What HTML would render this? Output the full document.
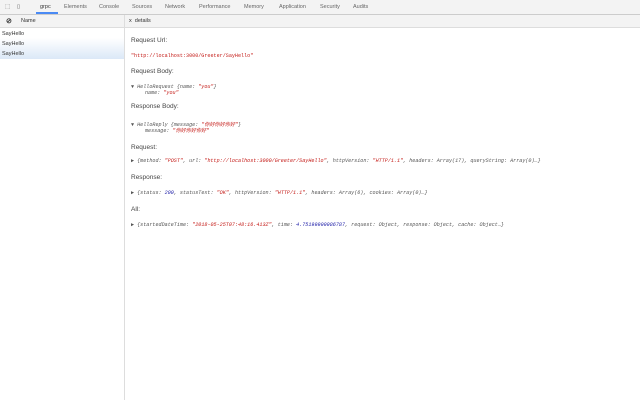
<!DOCTYPE html><html><head><style>
body{margin:0;width:640px;height:400px;background:#fff;font-family:"Liberation Sans",sans-serif;font-size:6px;color:#333;position:relative;overflow:hidden}
.top{position:absolute;left:0;top:0;width:640px;height:14px;background:#f3f3f3;border-bottom:1px solid #ccc}
.top span{position:absolute;top:4px;color:#666;font-size:5.5px}
.sub{position:absolute;left:0;top:15px;width:640px;height:12px;background:#f3f3f3;border-bottom:1px solid #ddd}
.left{position:absolute;left:0;top:28px;width:124px;height:372px;border-right:1px solid #ddd}
.r{position:absolute;left:2px;font-size:5.5px;color:#333}
.m{font-family:"Liberation Mono",monospace;font-style:italic;font-size:5.1px;color:#555;position:absolute;white-space:nowrap}
.h{position:absolute;left:131px;font-size:6.5px;color:#444}
.s{color:#c41a16}.n{color:#1a1aa6}
</style></head><body>
<div class="top">
<span style="left:5px;color:#555">⬚</span><span style="left:17px;color:#555">▯</span>
<span style="left:40px;color:#333">grpc</span>
<div style="position:absolute;left:36px;top:12px;width:22px;height:2px;background:#4a8af4"></div>
<span style="left:64px">Elements</span><span style="left:99px">Console</span><span style="left:132px">Sources</span><span style="left:165px">Network</span><span style="left:199px">Performance</span><span style="left:244px">Memory</span><span style="left:279px">Application</span><span style="left:320px">Security</span><span style="left:353px">Audits</span>
</div>
<div class="sub">
<span style="position:absolute;left:6px;top:2px;font-size:7px;font-weight:bold">⊘</span>
<span style="position:absolute;left:21px;top:3px;font-size:5.5px">Name</span>
<div style="position:absolute;left:124px;top:0;width:1px;height:12px;background:#ddd"></div>
<span style="position:absolute;left:129px;top:3px;font-size:5.5px">x&nbsp; details</span>
</div>
<div class="left">
<div style="position:absolute;left:0;top:10px;width:124px;height:21px;background:linear-gradient(#fff,#dbe8f7)"></div>
<span class="r" style="top:3px">SayHello</span><span class="r" style="top:13px">SayHello</span><span class="r" style="top:23px">SayHello</span>
</div>
<span class="h" style="top:37px">Request Url:</span>
<span class="m s" style="left:131px;top:53px;font-style:normal">"http://localhost:3000/Greeter/SayHello"</span>
<span class="h" style="top:68px">Request Body:</span>
<span class="m" style="left:131px;top:84px">▼ HelloRequest {name: <span class="s">"you"</span>}</span>
<span class="m" style="left:145px;top:90px">name: <span class="s">"you"</span></span>
<span class="h" style="top:103px">Response Body:</span>
<span class="m" style="left:131px;top:121px">▼ HelloReply {message: <span class="s">"你好你好你好"</span>}</span>
<span class="m" style="left:145px;top:127px">message: <span class="s">"你好你好你好"</span></span>
<span class="h" style="top:144px">Request:</span>
<span class="m" style="left:131px;top:158px">▶ {method: <span class="s">"POST"</span>, url: <span class="s">"http://localhost:3000/Greeter/SayHello"</span>, httpVersion: <span class="s">"HTTP/1.1"</span>, headers: Array(17), queryString: Array(0)…}</span>
<span class="h" style="top:174px">Response:</span>
<span class="m" style="left:131px;top:190px">▶ {status: <span class="n">200</span>, statusText: <span class="s">"OK"</span>, httpVersion: <span class="s">"HTTP/1.1"</span>, headers: Array(6), cookies: Array(0)…}</span>
<span class="h" style="top:206px">All:</span>
<span class="m" style="left:131px;top:222px">▶ {startedDateTime: <span class="s">"2018-05-25T07:48:16.413Z"</span>, time: <span class="n">4.75199999986787</span>, request: Object, response: Object, cache: Object…}</span>
</body></html>
